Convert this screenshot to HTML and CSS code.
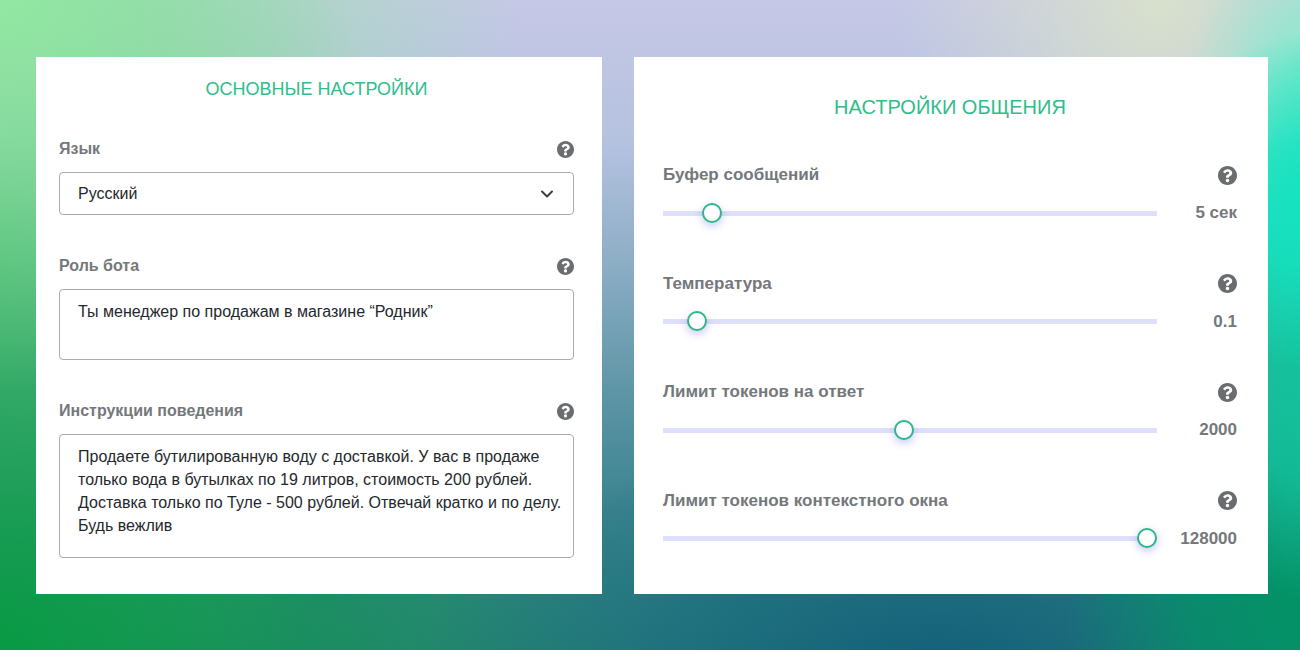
FILE: index.html
```html
<!DOCTYPE html>
<html lang="ru">
<head>
    <meta charset="UTF-8">
    <meta name="viewport" content="width=device-width, initial-scale=1.0">
    <title>Настройки бота</title>
    <link rel="stylesheet" href="styles.css">
</head>
<body>

<svg class="sprite" aria-hidden="true">
    <symbol id="icon-help" viewBox="8 8 496 496">
        <path d="M504 256c0 136.997-111.043 248-248 248S8 392.997 8 256C8 119.083 119.043 8 256 8s248 111.083 248 248zM262.655 90c-54.497 0-89.255 22.957-116.549 63.758-3.536 5.286-2.353 12.415 2.715 16.258l34.699 26.31c5.205 3.947 12.621 3.008 16.665-2.122 17.864-22.658 30.113-35.797 57.303-35.797 20.429 0 45.698 13.148 45.698 32.958 0 14.976-12.363 22.667-32.534 33.976C247.128 238.528 216 254.941 216 296v4c0 6.627 5.373 12 12 12h56c6.627 0 12-5.373 12-12v-1.333c0-28.462 83.186-29.647 83.186-106.667 0-58.002-60.165-102-116.531-102zM256 338c-25.365 0-46 20.635-46 46 0 25.364 20.635 46 46 46s46-20.636 46-46c0-25.364-20.635-46-46-46z"/>
    </symbol>
</svg>

<main class="page">
    <section class="card main-settings">
        <h2>ОСНОВНЫЕ НАСТРОЙКИ</h2>
        <div class="fields">
            <div class="field">
                <div class="field-head">
                    <label for="language">Язык</label>
                    <button type="button" class="help" aria-label="Справка"><svg><use href="#icon-help"/></svg></button>
                </div>
                <div class="select-wrap">
                    <select id="language">
                        <option>Русский</option>
                    </select>
                    <svg class="chevron" viewBox="0 0 14 14"><path d="M2 4.5l5 5 5-5"/></svg>
                </div>
            </div>

            <div class="field">
                <div class="field-head">
                    <label for="role">Роль бота</label>
                    <button type="button" class="help" aria-label="Справка"><svg><use href="#icon-help"/></svg></button>
                </div>
                <textarea id="role" class="role">Ты менеджер по продажам в магазине “Родник”</textarea>
            </div>

            <div class="field">
                <div class="field-head">
                    <label for="instructions">Инструкции поведения</label>
                    <button type="button" class="help" aria-label="Справка"><svg><use href="#icon-help"/></svg></button>
                </div>
                <textarea id="instructions" class="instructions">Продаете бутилированную воду с доставкой. У вас в продаже только вода в бутылках по 19 литров, стоимость 200 рублей. Доставка только по Туле - 500 рублей. Отвечай кратко и по делу. Будь вежлив</textarea>
            </div>
        </div>
    </section>

    <section class="card chat-settings">
        <h2>НАСТРОЙКИ ОБЩЕНИЯ</h2>
        <div class="sliders">
            <div class="slider">
                <div class="field-head">
                    <label for="buffer">Буфер сообщений</label>
                    <button type="button" class="help" aria-label="Справка"><svg><use href="#icon-help"/></svg></button>
                </div>
                <div class="slider-row">
                    <input type="range" id="buffer" min="0" max="60" value="5">
                    <output for="buffer">5 сек</output>
                </div>
            </div>

            <div class="slider">
                <div class="field-head">
                    <label for="temperature">Температура</label>
                    <button type="button" class="help" aria-label="Справка"><svg><use href="#icon-help"/></svg></button>
                </div>
                <div class="slider-row">
                    <input type="range" id="temperature" min="0" max="2" step="0.1" value="0.1">
                    <output for="temperature">0.1</output>
                </div>
            </div>

            <div class="slider">
                <div class="field-head">
                    <label for="answer-limit">Лимит токенов на ответ</label>
                    <button type="button" class="help" aria-label="Справка"><svg><use href="#icon-help"/></svg></button>
                </div>
                <div class="slider-row">
                    <input type="range" id="answer-limit" min="0" max="4096" value="2000">
                    <output for="answer-limit">2000</output>
                </div>
            </div>

            <div class="slider">
                <div class="field-head">
                    <label for="context-limit">Лимит токенов контекстного окна</label>
                    <button type="button" class="help" aria-label="Справка"><svg><use href="#icon-help"/></svg></button>
                </div>
                <div class="slider-row">
                    <input type="range" id="context-limit" min="0" max="128000" value="128000">
                    <output for="context-limit">128000</output>
                </div>
            </div>
        </div>
    </section>
</main>

</body>
</html>
```
FILE: styles.css
```css
* {
    box-sizing: border-box;
}
body {
    margin: 0;
    min-height: 100vh;
    font-family: "Liberation Sans", Arial, sans-serif;
    color: #212529;
    background:
        radial-gradient(ellipse 12% 26% at 101% 31%, #12e4c0 0%, rgba(18, 228, 192, 0.8) 40%, rgba(18, 228, 192, 0) 100%),
        radial-gradient(ellipse 12% 36% at 101% 56%, #10c49c 0%, rgba(16, 196, 156, 0.8) 50%, rgba(16, 190, 150, 0) 100%),
        radial-gradient(ellipse 12% 26% at 103% 14%, #6cecc8 0%, rgba(132, 236, 204, 0.8) 40%, rgba(150, 236, 208, 0) 100%),
        radial-gradient(ellipse 20% 40% at 102% 92%, #009464 0%, rgba(0, 148, 100, 0.7) 50%, rgba(0, 140, 100, 0) 100%),
        radial-gradient(ellipse 40% 36% at 72% 102%, #14607a 0%, rgba(20, 104, 124, 0.6) 50%, rgba(20, 104, 124, 0) 100%),
        radial-gradient(ellipse 40% 60% at 0% 0%, #92e8a2 0%, rgba(146, 226, 168, 0) 100%),
        radial-gradient(ellipse 20% 40% at 89% 0%, #d8e0cc 0%, rgba(216, 224, 204, 0) 100%),
        radial-gradient(ellipse 50% 80% at 0% 100%, #089a44 0%, rgba(10, 154, 72, 0) 100%),
        radial-gradient(ellipse 30% 90% at 0% 40%, #5cc080 0%, rgba(92, 192, 128, 0) 100%),
        linear-gradient(#c6c8e6 0%, #b4c2e0 22%, #8eaec6 40%, #5e96a6 60%, #3c8490 78%, #2e807e 100%);
}
.sprite {
    display: none;
}
.page {
    display: flex;
    gap: 32px;
    padding: 57px 32px 56px 36px;
}
.card {
    display: flex;
    flex-direction: column;
    min-width: 0;
    background: #fff;
}
.main-settings {
    flex: 515;
    padding: 20px 28px 36px 23px;
}
.chat-settings {
    flex: 574;
    padding: 38px 31px 43px 29px;
}
h2 {
    margin: 0;
    font-size: 18px;
    font-weight: 400;
    line-height: 24px;
    text-align: center;
    color: #2fbd8a;
}
.main-settings h2 {
    margin-bottom: 36px;
}
.chat-settings h2 {
    margin-bottom: 44px;
    font-size: 20px;
}
.fields {
    display: flex;
    flex-direction: column;
    gap: 39px;
}
.field-head {
    display: flex;
    justify-content: space-between;
    align-items: center;
    height: 24px;
    font-size: 16px;
    font-weight: 700;
    color: #74787b;
}
.field .field-head {
    margin-bottom: 11px;
}
.help {
    display: flex;
    padding: 0;
    border: none;
    background: none;
    color: #6a6d70;
    cursor: pointer;
}
.help svg {
    width: 17px;
    height: 17px;
    fill: currentColor;
}
select,
textarea {
    display: block;
    width: 100%;
    border: 1px solid #a9abb2;
    border-radius: 4px;
    background: #fff;
    color: #24282c;
    font-family: inherit;
    font-size: 16px;
    line-height: 23px;
}
select {
    height: 43px;
    padding: 0 40px 0 18px;
    appearance: none;
}
textarea {
    padding: 10px 8px 10px 18px;
    resize: none;
    overflow: hidden;
}
.role {
    height: 71px;
}
.instructions {
    height: 124px;
}
.select-wrap {
    position: relative;
}
.chevron {
    position: absolute;
    top: 15px;
    right: 20px;
    width: 14px;
    height: 14px;
    fill: none;
    stroke: #3a3e42;
    stroke-width: 2;
    stroke-linecap: round;
    stroke-linejoin: round;
    pointer-events: none;
}
.sliders {
    display: flex;
    flex: 1;
    flex-direction: column;
    justify-content: space-between;
}
.slider .field-head {
    margin-bottom: 14px;
    font-size: 17px;
}
.slider .help svg {
    width: 19px;
    height: 19px;
}
.slider-row {
    display: flex;
    align-items: center;
    height: 24px;
}
.slider-row output {
    width: 80px;
    font-size: 17px;
    font-weight: 700;
    text-align: right;
    color: #74787b;
}
input[type="range"] {
    flex: 1;
    min-width: 0;
    height: 20px;
    margin: 0;
    appearance: none;
    background: none;
    cursor: pointer;
}
input[type="range"]::-webkit-slider-runnable-track {
    height: 5px;
    background: #dedffa;
}
input[type="range"]::-webkit-slider-thumb {
    width: 20px;
    height: 20px;
    margin-top: -8px;
    appearance: none;
    border: 2px solid #2fb886;
    border-radius: 50%;
    background: #fff;
    box-shadow: 0 3px 8px rgba(110, 110, 230, 0.4);
}
```
